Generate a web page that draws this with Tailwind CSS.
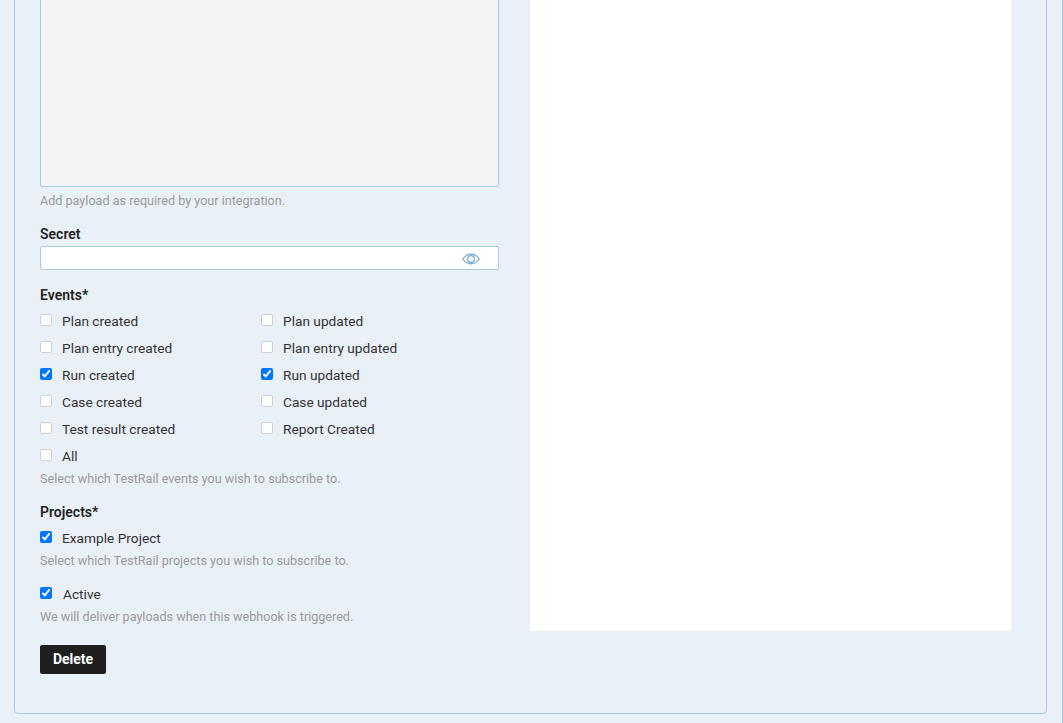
<!DOCTYPE html>
<html>
<head>
<meta charset="utf-8">
<script src="https://cdn.jsdelivr.net/npm/@tailwindcss/browser@4"></script>
</head>
<body class="bg-[#e9f0f7]">
<div class="h-[723px] w-[1063px] overflow-hidden flex flex-col justify-end pl-[14px] pr-[15px] pb-[9px] border-r border-[#a6cce3] font-['Roboto',sans-serif] text-[#333333]">
  <div class="shrink-0 border border-[#a6cce3] rounded-b-[4px] pl-[25px] pr-[35px] pb-[39px]">
    <div class="flex gap-[31px] items-stretch">
      <div class="w-[459px] pb-[5px]">
        <div class="h-[300px] bg-[#f4f4f4] border border-[#a6cce3] rounded-[2px]"></div>
        <p class="mt-[5px] h-[18px] leading-[18px] text-[12.6px] text-[#9b9b9b]">Add payload as required by your integration.</p>
        <label class="block mt-[15px] h-[18px] leading-[18px] text-[14px] font-semibold text-[#1f1f1f]">Secret</label>
        <div class="mt-[3px] h-[24px] bg-white border border-[#a6cce3] rounded-[2px] flex items-center justify-end pr-[18px]">
          <svg class="w-[18px] h-[12px] translate-y-px" viewBox="0 0 18 12" fill="none" stroke="#6ea6cd" stroke-width="1.2"><path d="M0.7 6C3 2.800 5.800 1.200 9 1.200s6 1.600 8.300 4.800C15 9.200 12.200 10.800 9 10.800S3 9.200 0.700 6Z"/><circle cx="9" cy="6" r="3.400"/></svg>
        </div>
        <div class="mt-[16px] h-[18px] leading-[18px] text-[14px] font-semibold text-[#1f1f1f]">Events*</div>
        <div class="mt-[4px] grid grid-cols-[221px_1fr] auto-rows-[27px] text-[13.7px]">
          <label class="flex items-center gap-[10px]"><input type="checkbox" class="appearance-none w-3 h-3 bg-white border border-[#cfcfcf] rounded-[2px] m-0 -translate-y-[2px]"><span>Plan created</span></label>
          <label class="flex items-center gap-[10px]"><input type="checkbox" class="appearance-none w-3 h-3 bg-white border border-[#cfcfcf] rounded-[2px] m-0 -translate-y-[2px]"><span>Plan updated</span></label>
          <label class="flex items-center gap-[10px]"><input type="checkbox" class="appearance-none w-3 h-3 bg-white border border-[#cfcfcf] rounded-[2px] m-0 -translate-y-[2px]"><span>Plan entry created</span></label>
          <label class="flex items-center gap-[10px]"><input type="checkbox" class="appearance-none w-3 h-3 bg-white border border-[#cfcfcf] rounded-[2px] m-0 -translate-y-[2px]"><span>Plan entry updated</span></label>
          <label class="flex items-center gap-[10px]"><input type="checkbox" checked class="w-3 h-3 m-0 -translate-y-[2px]"><span>Run created</span></label>
          <label class="flex items-center gap-[10px]"><input type="checkbox" checked class="w-3 h-3 m-0 -translate-y-[2px]"><span>Run updated</span></label>
          <label class="flex items-center gap-[10px]"><input type="checkbox" class="appearance-none w-3 h-3 bg-white border border-[#cfcfcf] rounded-[2px] m-0 -translate-y-[2px]"><span>Case created</span></label>
          <label class="flex items-center gap-[10px]"><input type="checkbox" class="appearance-none w-3 h-3 bg-white border border-[#cfcfcf] rounded-[2px] m-0 -translate-y-[2px]"><span>Case updated</span></label>
          <label class="flex items-center gap-[10px]"><input type="checkbox" class="appearance-none w-3 h-3 bg-white border border-[#cfcfcf] rounded-[2px] m-0 -translate-y-[2px]"><span>Test result created</span></label>
          <label class="flex items-center gap-[10px]"><input type="checkbox" class="appearance-none w-3 h-3 bg-white border border-[#cfcfcf] rounded-[2px] m-0 -translate-y-[2px]"><span>Report Created</span></label>
          <label class="flex items-center gap-[10px] col-span-2"><input type="checkbox" class="appearance-none w-3 h-3 bg-white border border-[#cfcfcf] rounded-[2px] m-0 -translate-y-[2px]"><span>All</span></label>
        </div>
        <p class="h-[18px] leading-[18px] text-[12.6px] text-[#9b9b9b]">Select which TestRail events you wish to subscribe to.</p>
        <div class="mt-[15px] h-[18px] leading-[18px] text-[14px] font-semibold text-[#1f1f1f]">Projects*</div>
        <label class="mt-[4px] h-[27px] flex items-center gap-[10px] text-[13.7px]"><input type="checkbox" checked class="w-3 h-3 m-0 -translate-y-[2px]"><span>Example Project</span></label>
        <p class="h-[18px] leading-[18px] text-[12.6px] text-[#9b9b9b]">Select which TestRail projects you wish to subscribe to.</p>
        <label class="mt-[11px] h-[27px] flex items-center gap-[11px] text-[13.7px]"><input type="checkbox" checked class="w-3 h-3 m-0 -translate-y-[2px]"><span>Active</span></label>
        <p class="h-[18px] leading-[18px] text-[12.6px] text-[#9b9b9b]">We will deliver payloads when this webhook is triggered.</p>
      </div>
      <div class="w-[481px] bg-white rounded-br-[2px]"></div>
    </div>
    <button class="mt-[14px] block w-[66px] h-[29px] bg-[#1f1f1f] text-white text-[14px] font-bold rounded-[2px]">Delete</button>
  </div>
</div>
</body>
</html>
